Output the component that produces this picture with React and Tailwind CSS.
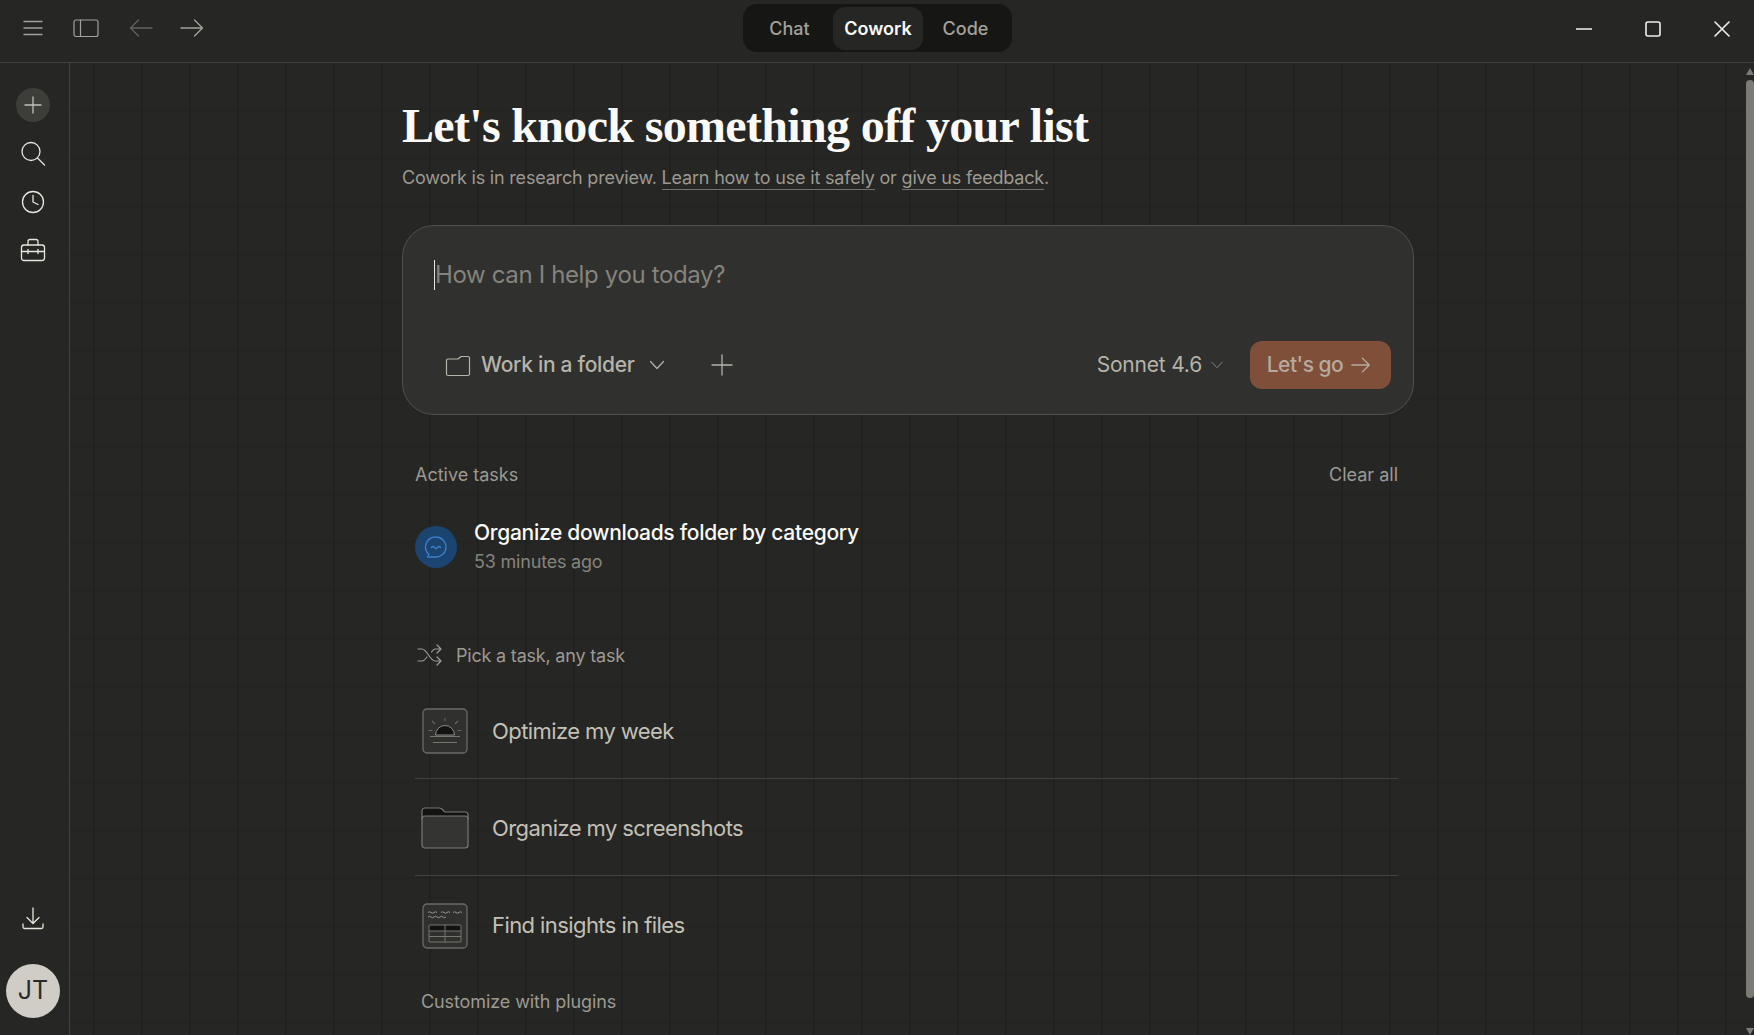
import React from 'react'

const Icon = ({ size = 24, className = '', sw = 1.5, children, box = 24 }) => (
  <svg width={size} height={size} viewBox={`0 0 ${box} ${box}`} fill="none" stroke="currentColor" strokeWidth={sw} strokeLinecap="round" strokeLinejoin="round" className={className}>
    {children}
  </svg>
)

const Chevron = ({ size = 20, className = '' }) => (
  <Icon size={size} className={className} sw={1.2} box={20}>
    <path d="M3.5 6.5 10 13.5l6.5-7" />
  </Icon>
)

const SunIcon = () => (
  <svg width="46" height="46" viewBox="0 0 46 46" fill="none" className="shrink-0">
    <rect x="1" y="1" width="44" height="44" rx="4" fill="#30302e" stroke="#6b6a65" strokeWidth="1.3" />
    <path d="M14 27a9.5 9.5 0 0 1 19 0z" fill="#131312" stroke="#8d8b84" strokeWidth="1" transform="translate(-.5 0)" />
    <path d="M8 28.5h30M11 34.5h24" stroke="#77766f" strokeWidth="1.2" />
    <path d="M23 10v3M10 13l3 3M36 13l-3 3M6.500 22.500h4M35.500 22.500h4" stroke="#66655f" strokeWidth="1.1" />
  </svg>
)

const FolderIcon = () => (
  <svg width="48" height="42" viewBox="0 0 48 42" fill="none" className="shrink-0">
    <path d="M1 12V4a3 3 0 0 1 3-3h14c2 0 3 1 4 2l1.500 2H44a3 3 0 0 1 3 3v4z" fill="#131312" stroke="#7a7972" strokeWidth="1.2" />
    <rect x="1" y="9" width="46" height="32" rx="3" fill="#343432" stroke="#7a7972" strokeWidth="1.2" />
  </svg>
)

const TableIcon = () => (
  <svg width="46" height="46" viewBox="0 0 46 46" fill="none" className="shrink-0">
    <rect x="1" y="1" width="44" height="44" rx="4" fill="#30302e" stroke="#6b6a65" strokeWidth="1.3" />
    <path d="M6 9.500q1.500-1.500 3 0t3 0 3 0M19 9.500q1.500-1.500 3 0t3 0 3 0M31 9.500q1.500-1.500 3 0t3 0 3 0M6 14q1.500-1.500 3 0t3 0 3 0 3 0 3 0 3 0" stroke="#96948d" strokeWidth="1" />
    <rect x="7" y="22" width="32" height="6" fill="#131312" />
    <rect x="7" y="22" width="32" height="17" rx="1" stroke="#77766f" strokeWidth="1" />
    <path d="M7 28h32M7 33.500h32M23 22v17" stroke="#77766f" strokeWidth="1" />
  </svg>
)

const TaskRow = ({ icon, label, border }) => (
  <div className={`flex h-[97px] items-center pt-[2px] ${border ? 'border-b border-[#41413e]' : ''}`}>
    <div className="flex w-[54px] justify-center pl-[5px]">{icon}</div>
    <span className="ml-[23px] text-[22px] tracking-[-0.58px] text-[#c2c0b6]">{label}</span>
  </div>
)

const App = () => {
  return (
    <div className="flex h-[1035px] w-[1754px] flex-col overflow-hidden bg-[#262624] font-['Inter','Liberation_Sans',sans-serif] text-[#c2c0b6]">
      {/* TITLE BAR */}
      <header className="relative flex h-[63px] shrink-0 items-start border-b border-[#41413f]">
        <div className="flex h-[56px] items-center pl-[21px] text-[#a3a199]">
          <Icon size={24} sw={1.4}><path d="M3 5.500h18M3 12h18M3 18.500h18" /></Icon>
          <Icon size={28} sw={1.2} className="ml-[27px]" box={28}>
            <rect x="2" y="6" width="24" height="16.500" rx="2" /><path d="M8.500 6v16.500" />
          </Icon>
          <Icon size={26} sw={1.4} className="ml-[28px] text-[#62615c]" box={26}>
            <path d="M24 13H3M10.500 5 2.500 13l8 8" />
          </Icon>
          <Icon size={26} sw={1.4} className="ml-[25px]" box={26}>
            <path d="M2 13h21M15.500 5l8 8-8 8" />
          </Icon>
        </div>

        <nav className="absolute left-[743px] top-[4px] flex h-[48px] w-[269px] items-center rounded-[14px] bg-[#161615] pl-[3px] text-[18px]">
          <span className="w-[87px] text-center font-medium text-[#a3a199]">Chat</span>
          <span className="flex h-[43px] w-[90px] items-center justify-center rounded-[12px] bg-[#262624] font-semibold text-[#faf9f5]">Cowork</span>
          <span className="w-[85px] text-center font-medium text-[#a3a199]">Code</span>
        </nav>

        <div className="ml-auto flex h-[58px] items-center pr-[24px] text-[#f0efe9]">
          <Icon size={16} sw={1.6} box={16}><path d="M.5 8h15" /></Icon>
          <Icon size={16} sw={1.6} className="ml-[53px]" box={16}><rect x="1" y="1" width="14" height="14" rx="2" /></Icon>
          <Icon size={16} sw={1.6} className="ml-[53px]" box={16}><path d="m1 1 14 14M15 1 1 15" /></Icon>
        </div>
      </header>

      <div className="flex min-h-0 flex-1">
        {/* SIDEBAR */}
        <aside className="flex w-[70px] shrink-0 flex-col items-center border-r border-[#41413f] pb-[17px] pr-[3px] pt-[25px] text-[#e8e6dc]">
          <div className="flex h-[34px] w-[34px] items-center justify-center rounded-full bg-[#3d3d3a] text-[#c2c0b6]">
            <Icon size={20} sw={1.3} box={20}><path d="M10 2v16M2 10h16" /></Icon>
          </div>
          <Icon size={28} sw={1.3} className="mt-[18px]" box={28}>
            <circle cx="12" cy="11.500" r="9" /><path d="m18.500 18 7 7" />
          </Icon>
          <Icon size={26} sw={1.3} className="mt-[21px]" box={26}>
            <circle cx="13" cy="13" r="10.500" /><path d="M13 6.500V13l5 2.500" />
          </Icon>
          <Icon size={28} sw={1.3} className="mt-[21px]" box={28}>
            <path d="M9 9V5.500a2 2 0 0 1 2-2h6a2 2 0 0 1 2 2V9" />
            <rect x="2.500" y="9" width="23" height="15.500" rx="2.500" />
            <path d="M2.500 15.500h23M9 13.500v4M19 13.500v4" />
          </Icon>

          <Icon size={26} sw={1.3} className="mt-auto" box={26}>
            <path d="M13 2v15M7 11.500l6 6 6-6M3 18v3a1.500 1.500 0 0 0 1.500 1.500h17A1.500 1.500 0 0 0 23 21v-3" />
          </Icon>
          <div className="mt-[32px] flex h-[54px] w-[54px] items-center justify-center rounded-full bg-[#cfcdc6] text-[25px] text-[#2b2a28]">JT</div>
        </aside>

        {/* MAIN */}
        <main className="relative flex-1 overflow-hidden bg-[linear-gradient(to_right,#212120_2px,transparent_2px),linear-gradient(to_bottom,#242423_2px,transparent_2px)] bg-[size:48px_48px] bg-[position:23px_46px] pl-[332px] pt-[35px]">
          <div className="w-[1012px]">
            <h1 className="h-[56px] font-['Liberation_Serif',serif] text-[48px] font-bold leading-[56px] tracking-[-0.67px] text-[#faf9f5]">Let's knock something off your list</h1>
            <p className="mt-[10px] h-[28px] text-[18px] leading-[28px] tracking-[-0.19px] text-[#9c9a92]">
              Cowork is in research preview. <a className="border-b border-[#73726c] pb-[1px]">Learn how to use it safely</a> or <a className="border-b border-[#73726c] pb-[1px]">give us feedback</a>.
            </p>

            {/* PROMPT CARD */}
            <section className="mt-[33px] flex h-[190px] flex-col rounded-[32px] border border-[#50504d] bg-[#30302e] pl-[31px] pr-[22px]">
              <div className="mt-[33px] flex h-[32px] items-center">
                <span className="h-[30px] w-px bg-[#e8e6dc]" />
                <span className="text-[24px] tracking-[-0.36px] text-[#85837c]">How can I help you today?</span>
              </div>
              <div className="mt-[50px] flex items-center">
                <Icon size={26} sw={1.2} className="ml-[11px] text-[#b5b3aa]" box={26}>
                  <path d="M1.500 22V8.500A1.500 1.500 0 0 1 3 7h10l3-2.500h7A1.500 1.500 0 0 1 24.500 6v16a1.500 1.500 0 0 1-1.500 1.500H3A1.500 1.500 0 0 1 1.500 22z" />
                </Icon>
                <span className="ml-[10px] text-[21px] font-medium tracking-[-0.3px] text-[#b5b3aa]">Work in a folder</span>
                <Chevron className="ml-[12px] text-[#b5b3aa]" />
                <Icon size={24} sw={1.3} className="ml-[43px] text-[#b5b3aa]"><path d="M12 2v20M2 12h20" /></Icon>

                <span className="ml-auto text-[21px] tracking-[-0.2px] text-[#b5b3aa]">Sonnet 4.6</span>
                <Chevron size={16} className="ml-[7px] text-[#85837c]" />
                <button className="ml-[25px] flex h-[48px] w-[141px] items-center justify-center gap-[7px] rounded-[12px] bg-[#7f4f3a] pr-[2px] text-[21px] font-medium tracking-[-0.5px] text-[#b6aa9f]">
                  Let's go
                  <Icon size={22} sw={1.5}><path d="M2 12h19M13.500 4.500 21 12l-7.500 7.500" /></Icon>
                </button>
              </div>
            </section>

            <div className="ml-[13px] w-[983px]">
              {/* ACTIVE TASKS */}
              <div className="mt-[47px] flex h-[24px] items-center justify-between text-[18px] text-[#9c9a92]">
                <span>Active tasks</span>
                <span>Clear all</span>
              </div>
              <div className="mt-[32px] flex items-center">
                <div className="flex h-[42px] w-[42px] shrink-0 items-center justify-center rounded-full bg-[#1c4470] text-[#3d80c9]">
                  <Icon size={24} sw={1.3}>
                    <path d="M12 2a10 10 0 0 1 0 20H3.500l1.500-2.500A10 10 0 0 1 12 2z" />
                    <path d="M7.500 12.500q1.500-2 3 0t3 0 3 0" />
                  </Icon>
                </div>
                <div className="ml-[17px]">
                  <div className="h-[29px] text-[21px] font-medium leading-[29px] tracking-[-0.3px] text-[#faf9f5]">Organize downloads folder by category</div>
                  <div className="h-[29px] text-[18px] leading-[29px] tracking-[-0.2px] text-[#85837c]">53 minutes ago</div>
                </div>
              </div>

              {/* PICK A TASK */}
              <div className="mt-[67px] flex h-[24px] items-center text-[18px] tracking-[-0.2px] text-[#9c9a92]">
                <Icon size={26} sw={1.2} className="ml-[2px]" box={26}>
                  <path d="M1 7h4c5 0 8 12 13 12h6M1 19h4c2 0 3.500-2 5-4M14.500 10c1-1.500 2-3 3.500-3h6M20 3l4 4-4 4M20 15l4 4-4 4" />
                </Icon>
                <span className="ml-[13px]">Pick a task, any task</span>
              </div>
              <div className="mt-[15px]">
                <TaskRow icon={<SunIcon />} label="Optimize my week" border />
                <TaskRow icon={<FolderIcon />} label="Organize my screenshots" border />
                <TaskRow icon={<TableIcon />} label="Find insights in files" />
              </div>
              <div className="ml-[6px] mt-[15px] text-[18px] tracking-[-0.1px] text-[#9c9a92]">Customize with plugins</div>
            </div>
          </div>

          {/* SCROLLBAR */}
          <div className="absolute right-0 top-0 flex h-full w-[8px] flex-col items-center pt-[5px]">
            <span className="h-0 w-0 border-x-[4px] border-b-[7px] border-x-transparent border-b-[#7b7a74]" />
            <span className="mt-[5px] h-[918px] w-full rounded-[4px] bg-[#7b7a74]" />
            <span className="mt-[30px] h-0 w-0 border-x-[4px] border-t-[7px] border-x-transparent border-t-[#7b7a74]" />
          </div>
        </main>
      </div>
    </div>
  )
}

export default App
